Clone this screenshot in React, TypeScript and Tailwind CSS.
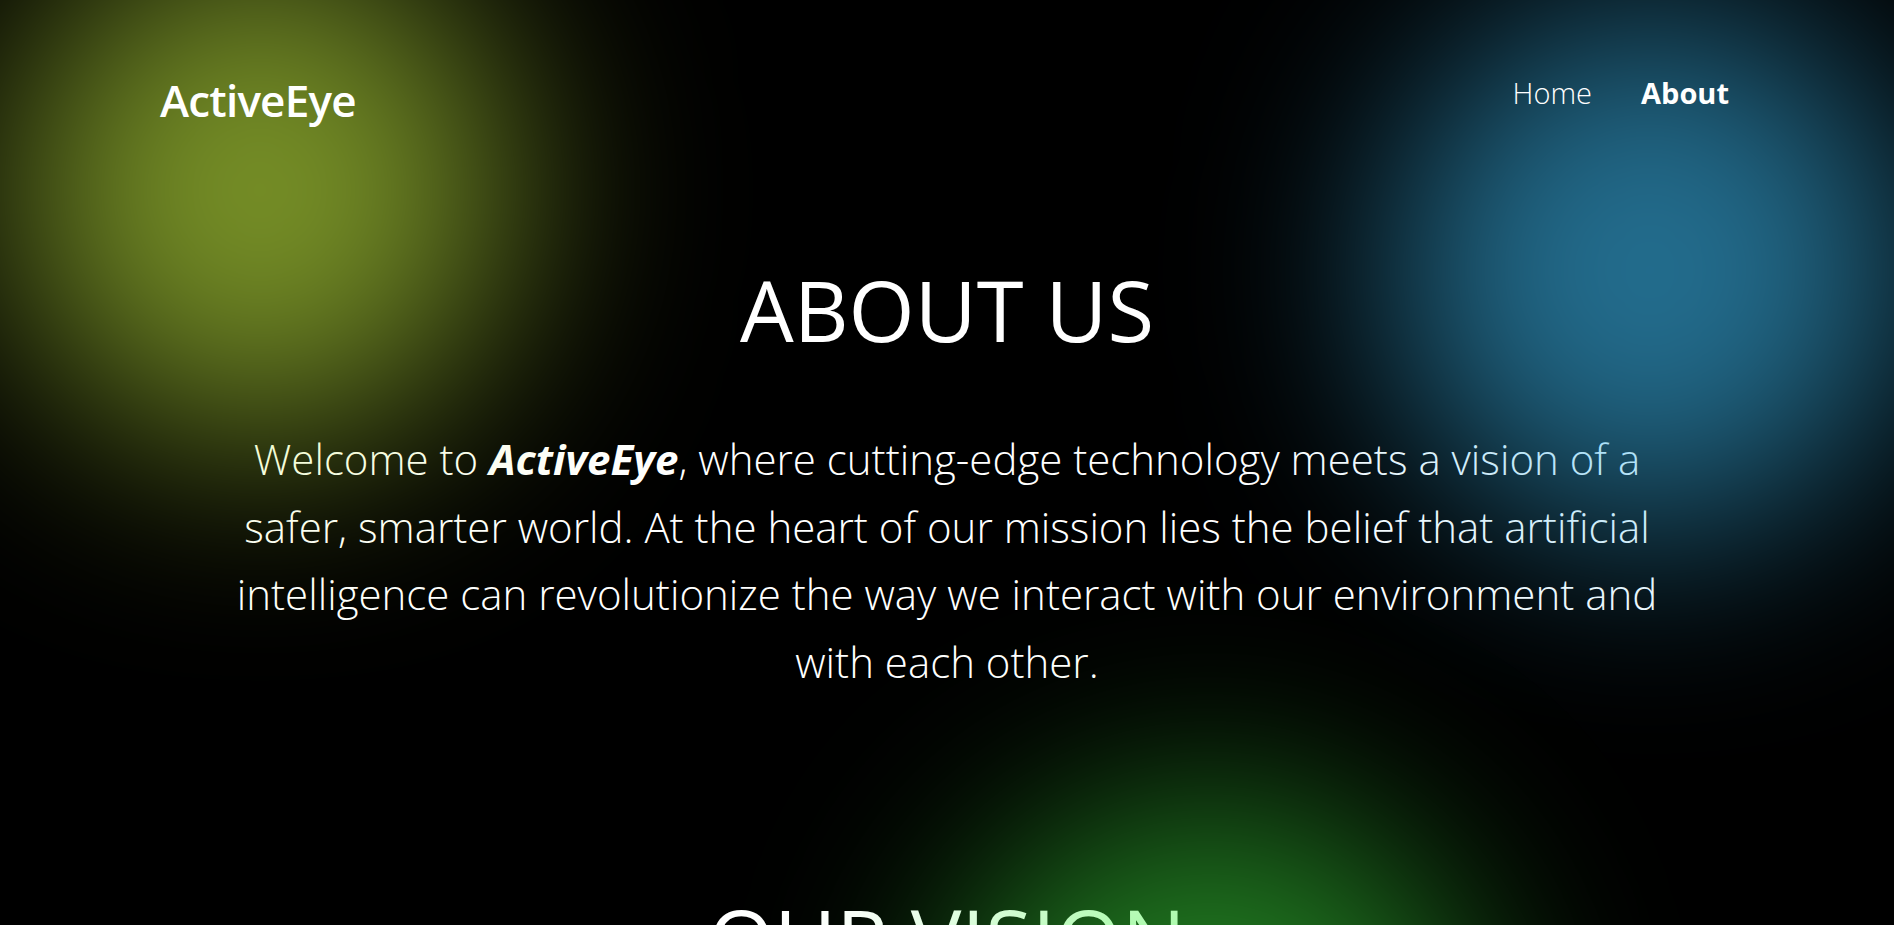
export default function App() {
  const links = [
    { label: 'Home', active: false },
    { label: 'About', active: true },
  ]

  return (
    <div className="relative h-screen w-full overflow-hidden bg-black text-white font-['Open_Sans','Noto_Sans',sans-serif]">
      <header className="relative z-20 flex items-start justify-between pl-[160px] pr-[165px] pt-[70px]">
        <a href="#" className="text-[44px] leading-[60px] font-semibold tracking-[-0.8px]">
          ActiveEye
        </a>
        <nav className="mt-[3px] flex gap-[49px]">
          {links.map((link) => (
            <a
              key={link.label}
              href="#"
              className={`text-[29px] leading-[40px] ${link.active ? 'font-bold' : 'font-light'}`}
            >
              {link.label}
            </a>
          ))}
        </nav>
      </header>

      <main className="relative flex flex-col items-center text-center">
        <h1 className="mt-[129px] text-[85px] leading-[100px] font-normal">ABOUT US</h1>
        <p className="mt-[66px] text-[42px] leading-[67.5px] font-light">
          Welcome to <b className="font-bold italic">ActiveEye</b>, where cutting-edge technology meets a vision of a
          <br />
          safer, smarter world. At the heart of our mission lies the belief that artificial
          <br />
          intelligence can revolutionize the way we interact with our environment and
          <br />
          with each other.
        </p>

        <h2 className="mt-[193px] text-[85px] leading-[100px] font-normal">OUR VISION</h2>
      </main>

      {/* glow blobs sit over the content and tint it */}
      <div className="pointer-events-none absolute left-[10px] top-[-60px] z-10 h-[500px] w-[500px] rounded-full bg-[rgba(200,242,65,0.6)] blur-[110px]" />
      <div className="pointer-events-none absolute left-[1390px] top-[10px] z-10 h-[520px] w-[520px] rounded-full bg-[rgba(58,182,237,0.6)] blur-[105px]" />
      <div className="pointer-events-none absolute left-[940px] top-[800px] z-10 h-[540px] w-[540px] rounded-full bg-[rgba(66,245,66,0.5)] blur-[100px]" />
    </div>
  )
}
